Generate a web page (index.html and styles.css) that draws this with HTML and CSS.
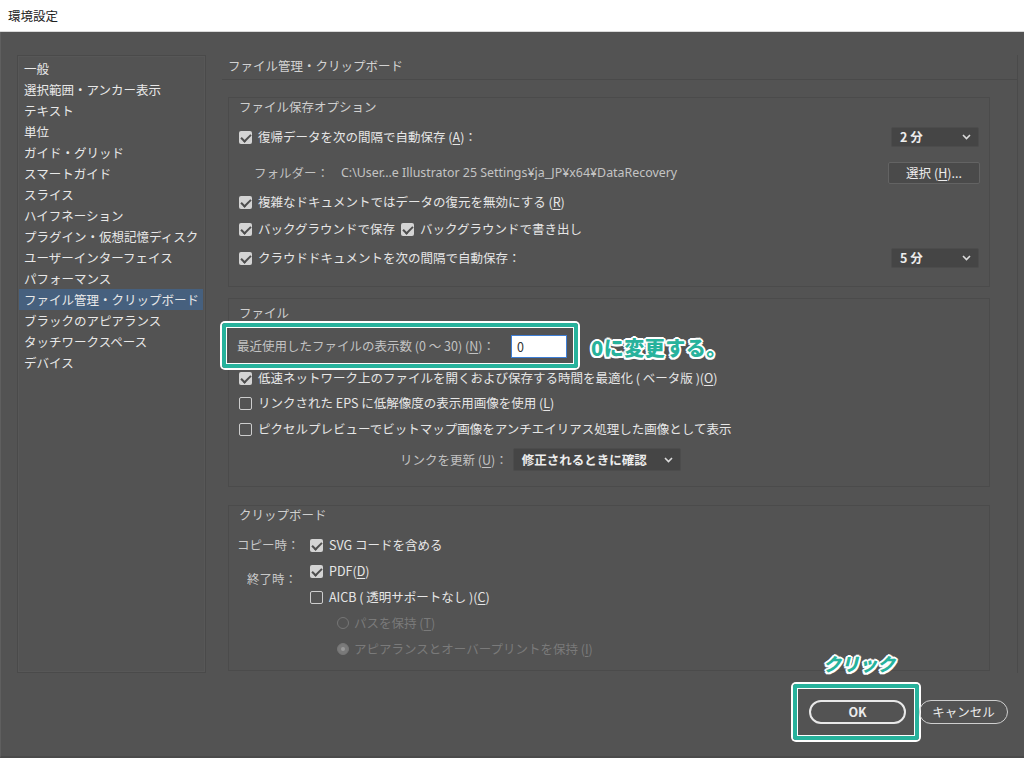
FILE: index.html
```html
<!DOCTYPE html>
<html lang="ja">
<head>
<meta charset="utf-8">
<title>環境設定</title>
<link rel="stylesheet" href="styles.css">
</head>
<body>
<div class="titlebar">環境設定</div>
<div class="window">
  <div class="main">
    <nav class="sidebar">
      <div class="nav-item">一般</div>
      <div class="nav-item">選択範囲・アンカー表示</div>
      <div class="nav-item">テキスト</div>
      <div class="nav-item">単位</div>
      <div class="nav-item">ガイド・グリッド</div>
      <div class="nav-item">スマートガイド</div>
      <div class="nav-item">スライス</div>
      <div class="nav-item">ハイフネーション</div>
      <div class="nav-item">プラグイン・仮想記憶ディスク</div>
      <div class="nav-item">ユーザーインターフェイス</div>
      <div class="nav-item">パフォーマンス</div>
      <div class="nav-item selected">ファイル管理・クリップボード</div>
      <div class="nav-item">ブラックのアピアランス</div>
      <div class="nav-item">タッチワークスペース</div>
      <div class="nav-item">デバイス</div>
    </nav>
    <div class="content">
      <div class="page-title">ファイル管理・クリップボード</div>

      <section class="group group-save">
        <div class="group-title">ファイル保存オプション</div>
        <div class="row r1">
          <span class="cb on"></span><span>復帰データを次の間隔で自動保存 (<u>A</u>)：</span>
          <div class="select small"><span>2 分</span><svg width="9" height="6" viewBox="0 0 9 6"><path d="M1 1l3.5 3.5L8 1" stroke="#dcdcdc" stroke-width="1.6" fill="none"/></svg></div>
        </div>
        <div class="row r2 folder">
          <span class="muted">フォルダー：</span>
          <span class="path">C:\User...e Illustrator 25 Settings¥ja_JP¥x64¥DataRecovery</span>
          <div class="btn-choose">選択 (<u>H</u>)...</div>
        </div>
        <div class="row r3">
          <span class="cb on"></span><span>複雑なドキュメントではデータの復元を無効にする (<u>R</u>)</span>
        </div>
        <div class="row r4">
          <span class="cb on"></span><span>バックグラウンドで保存</span>
          <span class="cb on second"></span><span>バックグラウンドで書き出し</span>
        </div>
        <div class="row r5">
          <span class="cb on"></span><span>クラウドドキュメントを次の間隔で自動保存：</span>
          <div class="select small"><span>5 分</span><svg width="9" height="6" viewBox="0 0 9 6"><path d="M1 1l3.5 3.5L8 1" stroke="#dcdcdc" stroke-width="1.6" fill="none"/></svg></div>
        </div>
      </section>

      <section class="group group-file">
        <div class="group-title">ファイル</div>
        <div class="row f1 recent">
          <span class="muted">最近使用したファイルの表示数 (0 ～ 30) (<u>N</u>)：</span>
          <div class="num-input">0</div>
          <div class="hl hl-recent"></div>
          <div class="note note-recent">0に変更する。</div>
        </div>
        <div class="row f2">
          <span class="cb on"></span><span>低速ネットワーク上のファイルを開くおよび保存する時間を最適化 ( ベータ版 )(<u>O</u>)</span>
        </div>
        <div class="row f3">
          <span class="cb off"></span><span>リンクされた EPS に低解像度の表示用画像を使用 (<u>L</u>)</span>
        </div>
        <div class="row f4">
          <span class="cb off"></span><span>ピクセルプレビューでビットマップ画像をアンチエイリアス処理した画像として表示</span>
        </div>
        <div class="row f5 link-update">
          <span class="muted">リンクを更新 (<u>U</u>)：</span>
          <div class="select wide"><span>修正されるときに確認</span><svg width="9" height="6" viewBox="0 0 9 6"><path d="M1 1l3.5 3.5L8 1" stroke="#dcdcdc" stroke-width="1.6" fill="none"/></svg></div>
        </div>
      </section>

      <section class="group group-clip">
        <div class="group-title">クリップボード</div>
        <div class="clip-grid">
          <div class="clip-label">コピー時：</div>
          <div class="clip-ctrl"><span class="cb on"></span><span>SVG コードを含める</span></div>
          <div class="clip-label exit">終了時：</div>
          <div class="clip-ctrl"><span class="cb on"></span><span>PDF(<u>D</u>)</span></div>
          <div class="clip-ctrl c3"><span class="cb off"></span><span>AICB ( 透明サポートなし )(<u>C</u>)</span></div>
          <div class="clip-ctrl c4 disabled"><span class="radio"></span><span>パスを保持 (<u>T</u>)</span></div>
          <div class="clip-ctrl c5 disabled"><span class="radio on"></span><span>アピアランスとオーバープリントを保持 (<u>I</u>)</span></div>
        </div>
      </section>
    </div>
  </div>
  <div class="footer">
    <div class="btn ok">OK
      <div class="hl hl-ok"></div>
      <div class="note note-ok">クリック</div>
    </div>
    <div class="btn cancel">キャンセル</div>
  </div>
</div>
</body>
</html>
```
FILE: styles.css
```css
* { box-sizing: border-box; }
html, body { margin: 0; }
body {
  width: 1024px;
  height: 758px;
  overflow: hidden;
  background: #535353;
  font-family: "Noto Sans CJK JP", "Noto Sans", sans-serif;
  font-size: 12.5px;
  line-height: 18px;
  color: #e6e6e6;
}
u { text-decoration-thickness: 1px; text-underline-offset: 2px; }

.titlebar {
  height: 32px;
  background: #ffffff;
  color: #222;
  padding-left: 8px;
  display: flex;
  align-items: center;
  font-size: 12.5px;
  border-bottom: 1px solid #d9d9d9;
}

.window {
  height: 726px;
  border-left: 1px solid #5f5f5f;
  border-bottom: 2px solid #4a4a4a;
  display: flex;
  flex-direction: column;
}
.main {
  display: flex;
  padding: 23px 0 0 16px;
}

.sidebar {
  width: 189px;
  height: 618px;
  border: 1px solid #4a4a4a;
  box-shadow: inset 0 0 0 1px #575757;
  padding: 2px 2px 0 1px;
}
.nav-item {
  height: 21px;
  line-height: 21px;
  padding-left: 5px;
  color: #e8e8e8;
  white-space: nowrap;
}
.nav-item.selected { background: #46607e; }

.content {
  margin-left: 16px;
  width: 796px;
  height: 618px;
  border-right: 1px solid #4a4a4a;
}
.page-title {
  height: 25px;
  padding: 2px 0 0 6px;
  color: #d2d2d2;
  border-bottom: 1px solid #4a4a4a;
}

.group {
  margin-left: 6px;
  width: 762px;
  border: 1px solid #4b4b4b;
  padding: 0 10px;
}
.group-title { color: #cfcfcf; height: 18px; }
.group-save { margin-top: 17px; padding-bottom: 17px; }
.group-file { margin-top: 11px; padding-top: 5px; padding-bottom: 15px; }
.group-clip { margin-top: 18px; padding-top: 0; padding-bottom: 8px; }

.row {
  display: flex;
  align-items: center;
  height: 22px;
  white-space: nowrap;
  position: relative;
}
.r1 { margin-top: 10px; }
.r2 { margin-top: 13px; height: 24px; }
.r3 { margin-top: 6px; }
.r4 { margin-top: 5px; }
.r5 { margin-top: 7px; }
.f1 { margin-top: 13px; margin-left: -2px; }
.f2 { margin-top: 10px; }
.f3 { margin-top: 3px; }
.f4 { margin-top: 4px; }
.f5 { margin-top: 8px; height: 23px; padding-left: 161px; }

.muted { color: #c2c2c2; }

.cb {
  position: relative;
  width: 13px;
  height: 13px;
  border-radius: 2px;
  flex: none;
  margin-right: 6px;
}
.cb.on { background: #d4d4d4; }
.cb.on::after {
  content: "";
  position: absolute;
  left: 4px;
  top: 1px;
  width: 4px;
  height: 8px;
  border: solid #4e4e4e;
  border-width: 0 2px 2px 0;
  transform: rotate(45deg);
}
.cb.off { border: 1px solid #cdcdcd; }
.cb.second { margin-left: 6px; }

.select {
  margin-left: auto;
  display: flex;
  align-items: center;
  justify-content: space-between;
  background: #454545;
  border: 1px solid #4c4c4c;
  border-radius: 2px;
  color: #ededed;
  font-weight: bold;
  padding: 0 7px 0 8px;
}
.select.small { width: 88px; height: 20px; }
.select.wide { margin-left: 5px; width: 168px; height: 23px; padding-left: 8px; }

.folder { padding-left: 15px; }
.path {
  margin-left: 12px;
  font-family: "Noto Sans", sans-serif;
  font-size: 12.4px;
  color: #c4c4c4;
}
.btn-choose {
  margin-left: auto;
  margin-right: -1px;
  width: 92px;
  height: 22px;
  border: 1px solid #636363;
  background: #4a4a4a;
  border-radius: 2px;
  display: flex;
  align-items: center;
  justify-content: center;
  color: #ececec;
}

.num-input {
  margin-left: 16px;
  width: 56px;
  height: 23px;
  background: #ffffff;
  border: 1px solid #3f7fd6;
  color: #333;
  padding-left: 5px;
  line-height: 21px;
}

.hl {
  position: absolute;
  border: 4px solid #27b29c;
  border-radius: 3px;
  box-shadow: 0 0 0 2px #ffffff, inset 0 0 0 1px #ffffff;
  pointer-events: none;
}
.hl-recent { left: -15px; top: -12px; width: 356px; height: 45px; }
.note {
  position: absolute;
  font-weight: 900;
  font-size: 20px;
  line-height: 26px;
  color: #27b29c;
  white-space: nowrap;
  text-shadow:
    2px 0 0 #fff, -2px 0 0 #fff, 0 2px 0 #fff, 0 -2px 0 #fff,
    1.5px 1.5px 0 #fff, -1.5px 1.5px 0 #fff, 1.5px -1.5px 0 #fff, -1.5px -1.5px 0 #fff;
}
.note-recent { left: 354px; top: 0; letter-spacing: 0.5px; }

.clip-grid {
  margin-top: 8px;
  margin-left: -2px;
  display: grid;
  grid-template-columns: 60px 1fr;
  grid-template-rows: repeat(5, 26px);
  column-gap: 13px;
}
.clip-label { text-align: right; color: #c8c8c8; align-self: center; white-space: nowrap; }
.clip-label.exit { grid-row: 2; align-self: start; margin-top: 12px; }
.clip-ctrl { grid-column: 2; display: flex; align-items: center; white-space: nowrap; }
.clip-ctrl.c3 { grid-row: 3; }
.clip-ctrl.c4 { grid-row: 4; padding-left: 27px; }
.clip-ctrl.c5 { grid-row: 5; padding-left: 27px; }
.disabled { color: #7a7a7a; }
.radio {
  position: relative;
  width: 12px;
  height: 12px;
  border-radius: 50%;
  border: 1px solid #767676;
  margin-right: 5px;
  flex: none;
}
.radio.on { background: #7a7a7a; }
.radio.on::after {
  content: "";
  position: absolute;
  left: 3px;
  top: 3px;
  width: 4px;
  height: 4px;
  border-radius: 50%;
  background: #9a9a9a;
}

.footer {
  display: flex;
  justify-content: flex-end;
  gap: 13px;
  padding: 27px 16px 0 0;
}
.btn {
  position: relative;
  height: 24px;
  border-radius: 12px;
  display: flex;
  align-items: center;
  justify-content: center;
  color: #ececec;
}
.btn.ok { width: 97px; border: 2px solid #e8e8e8; font-weight: bold; }
.btn.cancel { width: 89px; border: 1.5px solid #cfcfcf; }
.hl-ok { left: -18px; top: -18px; width: 126px; height: 56px; }
.note-ok { left: 12px; top: -51px; font-size: 18px; line-height: 24px; font-style: italic; }
```
